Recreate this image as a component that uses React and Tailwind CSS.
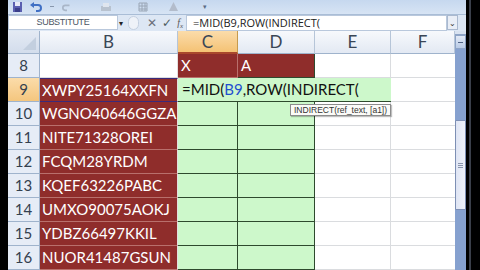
import React from "react";

const font = { fontFamily: "Lato, 'Open Sans', sans-serif" };

const rows = [
  { n: 8, b: "", c: "X", d: "A" },
  { n: 9, b: "XWPY25164XXFN", edit: true },
  { n: 10, b: "WGNO40646GGZA" },
  { n: 11, b: "NITE71328OREI" },
  { n: 12, b: "FCQM28YRDM" },
  { n: 13, b: "KQEF63226PABC" },
  { n: 14, b: "UMXO90075AOKJ" },
  { n: 15, b: "YDBZ66497KKIL" },
  { n: 16, b: "NUOR41487GSUN" },
];

function QuickBar() {
  return (
    <div className="h-[14px] bg-gradient-to-b from-[#c6d8ef] to-[#d7e4f4] flex items-center gap-[8px] pl-[5px]">
      <svg width="9" height="10" viewBox="0 0 9 10">
        <rect x="0" y="0" width="9" height="10" fill="#5a5fb0" />
        <rect x="2" y="0" width="5" height="4" fill="#e6e9f7" />
        <rect x="2" y="6" width="5" height="4" fill="#3b3f8a" />
      </svg>
      <svg width="12" height="10" viewBox="0 0 12 10">
        <path d="M3 3 H8 a3 3 0 0 1 0 6 H6" stroke="#3f6fc4" strokeWidth="2" fill="none" />
        <path d="M0 3 L4 0 V6 Z" fill="#3f6fc4" />
      </svg>
      <span className="w-[4px] h-[1px] bg-[#8897ad]" />
      <svg width="10" height="10" viewBox="0 0 12 10">
        <path d="M9 3 H4 a3 3 0 0 0 0 6 H6" stroke="#a9b6c8" strokeWidth="2" fill="none" />
      </svg>
      <span className="w-[12px]" />
      <svg width="12" height="10" viewBox="0 0 12 10">
        <rect x="1" y="4" width="10" height="5" fill="#b8c2cf" />
        <rect x="3" y="1" width="6" height="4" fill="#dfe5ee" />
      </svg>
      <span className="w-[10px]" />
      <svg width="10" height="10" viewBox="0 0 10 10">
        <path d="M1 1h8v8H1zM1 4h8M1 7h8M4 1v8M7 1v8" stroke="#9aa6b6" fill="none" />
      </svg>
      <span className="w-[4px]" />
      <svg width="11" height="10" viewBox="0 0 11 10">
        <path d="M5.5 0 L10 9 H1 Z" fill="#b3bccb" />
      </svg>
      <span className="w-[8px]" />
      <span className="text-[7px] leading-none text-[#5b6b85]" style={font}>▾</span>
    </div>
  );
}

function FormulaBar() {
  return (
    <div className="h-[18px] bg-[#dde7f4] border-t border-[#a9bdd6] flex items-center">
      <div className="w-[110px] h-[15px] bg-white border border-[#b9c8dc] flex items-center justify-center text-[9px] text-[#4b5563] tracking-[-0.3px]" style={{ fontFamily: "'Liberation Sans', sans-serif" }}>
        SUBSTITUTE
      </div>
      <span className="text-[8px] text-[#222] ml-[1px] w-[8px]">▾</span>
      <div className="w-[11px] h-[14px] rounded-full bg-[#eef2f8] border border-[#c3cfe0] ml-[1px]" />
      <span className="ml-[8px] text-[12px] text-[#6a6f78] leading-none" style={{ fontFamily: "'DejaVu Sans', sans-serif" }}>✕</span>
      <span className="ml-[5px] text-[12px] text-[#4a5a5a] leading-none" style={{ fontFamily: "'DejaVu Sans', sans-serif" }}>✓</span>
      <span className="ml-[5px] text-[10px] italic text-[#555] leading-none" style={{ fontFamily: "'Liberation Serif', serif" }}>
        f<sub className="text-[7px]">x</sub>
      </span>
      <div className="ml-[3px] w-[261px] h-[16px] bg-white border border-[#b9c8dc] flex items-center pl-[6px] text-[11px] text-[#222]" style={{ fontFamily: "'Open Sans', sans-serif" }}>
        =MID(B9,ROW(INDIRECT(
      </div>
      <div className="w-[11px] h-[15px] bg-[#e9eef6] border border-[#aab9cf] flex items-center justify-center text-[8px] text-[#333] leading-none">
        ⌄
      </div>
    </div>
  );
}

function Header() {
  const cols = [
    { l: "B", w: "w-[138px]" },
    { l: "C", w: "w-[60px]", sel: true },
    { l: "D", w: "w-[77px]" },
    { l: "E", w: "w-[76px]" },
    { l: "F", w: "w-[64px]" },
  ];
  return (
    <div className="h-[23px] flex">
      <div className="w-[32px] bg-gradient-to-b from-[#e4eaf4] to-[#d3ddec] border-r border-b border-[#9fb3cc] relative">
        <div className="absolute right-[3px] bottom-[3px] w-0 h-0 border-l-[13px] border-l-transparent border-b-[13px] border-b-[#c3cfdf]" />
      </div>
      {cols.map((c) => (
        <div
          key={c.l}
          className={`${c.w} flex items-center justify-center text-[17px] text-[#3a4656] border-r ${
            c.sel
              ? "bg-gradient-to-b from-[#fbdcaa] to-[#f4c274] border-[#c59a4f] border-b-2 border-b-[#a9472b]"
              : "bg-gradient-to-b from-[#f7f9fc] to-[#e3e9f3] border-[#b6c5d8] border-b border-b-[#9fb3cc]"
          }`}
          style={font}
        >
          {c.l}
        </div>
      ))}
    </div>
  );
}

function Row({ r }) {
  const red = "bg-[#8f2d2b] text-white";
  const green = "bg-[#cdf8cb]";
  const hdr = r.edit
    ? "bg-gradient-to-b from-[#fbdcaa] to-[#f4c67e]"
    : "bg-[#e6ecf6]";
  return (
    <div className="h-[24px] flex text-[15px]" style={font}>
      <div className={`w-[32px] ${hdr} border-r border-b border-[#9fb3cc] flex items-center justify-center text-[#34404f]`}>
        {r.n}
      </div>
      <div
        className={`w-[138px] flex items-center pl-[2px] border-r border-[#e4dede] ${
          r.b ? red : "bg-white"
        } ${r.edit ? "border-y border-y-[#3b2a7a]" : r.b ? "border-b border-b-[#b9706c]" : "border-b border-b-[#dadcdf]"}`}
      >
        {r.b}
      </div>
      {r.n === 8 && (
        <>
          <div className={`w-[60px] ${red} flex items-center pl-[3px] border-r border-b border-[#b9706c]`}>{r.c}</div>
          <div className={`w-[77px] ${red} flex items-center pl-[3px] border-r border-b border-[#2e4a2e]`}>{r.d}</div>
          <div className="w-[76px] bg-white border-r border-b border-[#dadcdf]" />
          <div className="w-[64px] bg-white border-b border-[#dadcdf]" />
        </>
      )}
      {r.edit && (
        <>
          <div className={`w-[213px] ${green} flex items-center pl-[4px] text-[15px] text-[#111] border-b border-[#2e4a2e] relative`}>
            =MID(<span className="text-[#1f4fcf]">B9</span>,ROW(INDIRECT(
            <div className="absolute left-[112px] top-[26px] z-10 bg-[#fbfbf8] border border-[#8c8c8c] shadow-[1px_1px_1px_rgba(0,0,0,0.25)] px-[3px] h-[12px] flex items-center text-[8.5px] text-[#333] whitespace-nowrap" style={{ fontFamily: "'Liberation Sans', sans-serif" }}>
              INDIRECT(ref_text, [a1])
            </div>
          </div>
          <div className="w-[64px] bg-white border-b border-[#dadcdf]" />
        </>
      )}
      {!r.edit && r.n !== 8 && (
        <>
          <div className={`w-[60px] ${green} border-r border-b border-[#2e4a2e]`} />
          <div className={`w-[77px] ${green} border-r border-b border-[#2e4a2e]`} />
          <div className="w-[76px] bg-white border-r border-b border-[#dadcdf]" />
          <div className="w-[64px] bg-white border-b border-[#dadcdf]" />
        </>
      )}
    </div>
  );
}

function ScrollBar() {
  return (
    <div className="w-[11px] flex flex-col bg-[#86a1cf]">
      <div className="h-[4px] bg-[#d8e2f0] border-b border-[#8ea4c6]" />
      <div className="h-[14px] bg-gradient-to-b from-[#e3eaf6] to-[#b9cbe6] border border-[#8ea4c6] flex items-center justify-center">
        <span className="w-[5px] h-[1px] bg-[#4f6284]" />
      </div>
      <div className="h-[71px]" />
      <div className="h-[90px] bg-gradient-to-r from-[#dfe5f4] to-[#eef1f9] border border-[#7d8fb4] rounded-[1px] flex flex-col items-center justify-center gap-[1px]">
        <span className="w-[5px] h-[1px] bg-[#8a95ad]" />
        <span className="w-[5px] h-[1px] bg-[#8a95ad]" />
        <span className="w-[5px] h-[1px] bg-[#8a95ad]" />
      </div>
      <div className="flex-1" />
    </div>
  );
}

export default function App() {
  return (
    <div className="w-[480px] h-[270px] bg-black flex overflow-hidden">
      <div className="w-[8px] shrink-0" />
      <div className="w-[458px] shrink-0 flex flex-col">
        <QuickBar />
        <FormulaBar />
        <div className="flex flex-1">
          <div className="w-[447px] flex flex-col">
            <Header />
            {rows.map((r) => (
              <Row key={r.n} r={r} />
            ))}
          </div>
          <ScrollBar />
        </div>
      </div>
      <div className="w-[3px] shrink-0" />
      <div className="w-[2px] shrink-0 bg-[#3a3f4a]" />
    </div>
  );
}
